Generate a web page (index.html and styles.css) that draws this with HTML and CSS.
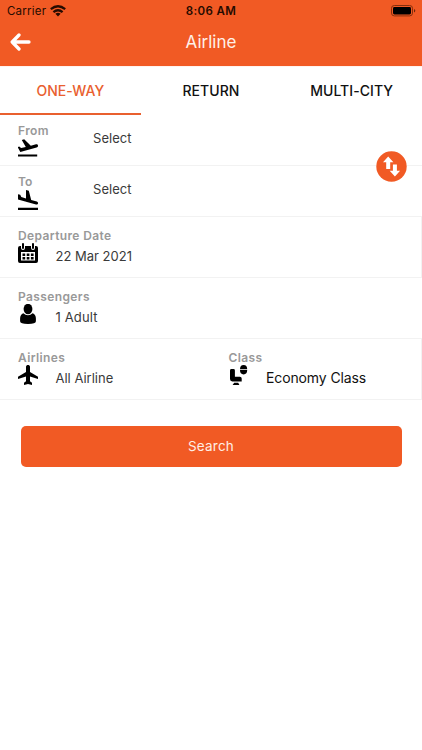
FILE: index.html
```html
<!DOCTYPE html>
<html lang="en">
<head>
<meta charset="utf-8">
<title>Airline</title>
<link rel="stylesheet" href="styles.css">
</head>
<body>
<header class="header">
  <div class="status">
    <div class="carrier"><span>Carrier</span>
      <svg class="wifi" viewBox="0 0 16 12"><g fill="none" stroke="#260b00" stroke-width="2.3"><path d="M.8 4.2Q8-1.6 15.2 4.2"/><path d="M3.4 7.1Q8 3.3 12.6 7.1"/></g><path d="M5.4 8.7Q8 6.7 10.6 8.7L8 11.4Z" fill="#260b00"/></svg>
    </div>
    <span class="time">8:06 AM</span>
    <svg class="battery" viewBox="0 0 25 12"><rect x=".5" y=".5" width="21" height="10.4" rx="2.8" fill="none" stroke="#872f0c"/><rect x="2" y="2" width="18" height="7.4" rx="1.4"/><path d="M23 4v3.6q1.3-.6 1.3-1.8T23 4Z" fill="#6a240a"/></svg>
  </div>
  <div class="titlebar">
    <svg class="back" viewBox="0 0 22 18"><path d="M9 2 2.2 9 9 16M3 9h16" fill="none" stroke="#fff" stroke-width="3.3" stroke-linecap="round" stroke-linejoin="round"/></svg>
    <h1>Airline</h1>
  </div>
</header>
<nav class="tabs">
  <span class="tab active">ONE-WAY</span><span class="tab">RETURN</span><span class="tab">MULTI-CITY</span>
</nav>
<main>
  <section class="route">
    <div class="place">
      <div><div class="label from">From</div>
        <svg class="icon" viewBox="0 0 20 20"><path d="M0 16.5h19.2v2.1H0zM20 7.5c-.2-1-1.1-1.5-2-1.2l-5.2 1.4L6.2 1.3l-2.4.6 4 7-4.7 1.2-1.9-1.5-1.5.5 2.6 4.8 16.3-4.4c1-.3 1.6-1 1.4-2z"/></svg></div>
      <span class="value">Select</span>
    </div>
    <div class="place">
      <div><div class="label to">To</div>
        <svg class="icon" viewBox="0 0 20 20"><path d="M0 17.8h20V20H0zM18 14.4c1 .3 1.8-.2 2-1 .2-.9-.3-1.7-1.2-2l-5.6-1.5L10.8.7 8 0v8.4L3.3 7.1 2.2 4.8 0 4.2v5.4z"/></svg></div>
      <span class="value">Select</span>
    </div>
    <svg class="swap" viewBox="0 0 31 31"><circle cx="15.5" cy="15.5" r="15.2" fill="#f15a24"/><path d="M12.2 5.4 17.4 11.3h-3.2v6.6h-4v-6.6H7zM18.9 25.6l-5.2-5.9h3.2v-6.2h4v6.2h3.2z" fill="#fff"/></svg>
  </section>
  <section class="field edge">
    <div><div class="label departure">Departure Date</div>
    <div class="line"><svg class="icon" viewBox="0 0 20 20"><path fill-rule="evenodd" d="M2 3h1v2q0 2 2 2t2-2V3h6v2q0 2 2 2t2-2V3h1q2 0 2 2v13q0 2-2 2H2q-2 0-2-2V5q0-2 2-2zM3 9v8.5h14V9z"/><path d="M4 1q0-1 1-1t1 1v4q0 1-1 1T4 5zM14 1q0-1 1-1t1 1v4q0 1-1 1t-1-1zM4.5 10.5h2.7v2.4H4.5zm4.2 0h2.7v2.4H8.7zm4.2 0h2.7v2.4h-2.7zM4.5 14h2.7v2.4H4.5zm4.2 0h2.7v2.4H8.7zm4.2 0h2.7v2.4h-2.7z"/></svg><span class="value date">22 Mar 2021</span></div></div>
  </section>
  <section class="field">
    <div><div class="label passengers">Passengers</div>
    <div class="line"><svg class="icon" viewBox="0 0 20 20"><ellipse cx="10" cy="5" rx="4.4" ry="5.2"/><path d="M5.4 9.2q2 2.1 4.6 2.1t4.6-2.1q3.3 1.3 3.3 5.3v2.8q0 2.7-7.9 2.7t-7.9-2.7v-2.8q0-4 3.3-5.3z"/></svg><span class="value adult">1 Adult</span></div></div>
  </section>
  <section class="field edge">
    <div><div class="label airlines">Airlines</div>
    <div class="line"><svg class="icon" viewBox="0 0 20 20"><path d="M20 14v-2.2l-8-4.8V1.8C12 .6 11 0 10 0S8 .6 8 1.8V7l-8 4.8V14l8-2.4v4.6l-2 1.6V20l4-1.1 4 1.1v-2.2l-2-1.6v-4.6z"/></svg><span class="value">All Airline</span></div></div>
    <div><div class="label class">Class</div>
    <div class="line"><svg class="icon" viewBox="0 0 20 20"><path d="M2.4 4h2.1q1.4 0 1.4 1.4v6.4h5q1.8 0 1.8 1.8v2.8H3.3Q1 16.4 1 14V5.4Q1 4 2.4 4zM5.2 17.8h4l1.2 2.2H3.6zM11 4.3Q11 0 14.6 0t3.6 4.3zM11 5h7.2q0 4.4-3.6 4.4T11 5z"/></svg><span class="value economy">Economy Class</span></div></div>
  </section>
  <button class="search">Search</button>
</main>
</body>
</html>
```
FILE: styles.css
```css
* { box-sizing: border-box; }
body { margin: 0; background: #fff; font-family: Inter, "Liberation Sans", sans-serif; color: #333; }
svg { display: block; flex: none; }
.header { height: 66px; background: #f15a24; }
.status { height: 22px; display: grid; grid-template-columns: 1fr auto 1fr; align-items: center; padding: 0 7px 0 7px; font-size: 11.5px; color: #260b00; }
.carrier { display: flex; align-items: center; gap: 4px; letter-spacing: .22px; }
.wifi { width: 16px; height: 12px; }
.time { font-weight: 600; letter-spacing: .4px; }
.battery { width: 25px; height: 12px; justify-self: end; margin-right: -1px; }
.titlebar { height: 40px; display: grid; grid-template-columns: 40px 1fr 40px; align-items: center; }
.back { width: 22px; height: 18px; margin: -1px 0 0 10px; }
h1 { margin: 0; font-size: 17px; line-height: 24px; font-weight: 400; text-align: center; color: #fff0e8; }
.tabs { height: 49px; display: grid; grid-template-columns: repeat(3, 1fr); text-align: center; border-top: 1px solid #fff3ef; }
.tab { font-size: 14px; line-height: 48px; font-weight: 450; color: #111; height: 48px; letter-spacing: .05px; }
.active { color: #e9602f; border-bottom: 2px solid #e9602f; }
.route { position: relative; }
.place { height: 51px; display: grid; grid-template-columns: 75px 1fr; padding: 8px 0 0 18px; border-bottom: 1px solid #f2f2f2; }
.place .value { line-height: 30px; letter-spacing: .05px; }
.label { height: 16px; font-size: 12px; line-height: 16px; font-weight: 600; color: #999; white-space: nowrap; letter-spacing: .38px; }
.to { letter-spacing: 0; }
.icon { width: 20px; height: 20px; fill: #000; }
.place .icon { margin-top: -1px; }
.place + .place .icon { margin-top: 0; }
.value { font-size: 13px; line-height: 20px; color: #3a3a3a; white-space: nowrap; }
.adult { letter-spacing: .15px; }
.swap { position: absolute; left: 376px; top: 36px; width: 31px; height: 31px; }
.field { height: 61px; display: grid; grid-template-columns: 210.5px 1fr; padding: 11px 0 0 18px; border-bottom: 1px solid #f2f2f2; }
.edge { border-right: 1px solid #f2f2f2; }
.line { display: flex; gap: 17.5px; margin-top: -1px; }
.line .value { padding-top: 3px; }
.value.economy { font-size: 14px; color: #111; letter-spacing: -.12px; }
.search { display: block; width: 381px; height: 41px; margin: 26px 0 0 20.5px; padding: 0 0 1px; border: 0; border-radius: 5px; background: #f15a24; color: #ffeee5; font: 400 13.5px Inter, sans-serif; letter-spacing: .2px; }
```
